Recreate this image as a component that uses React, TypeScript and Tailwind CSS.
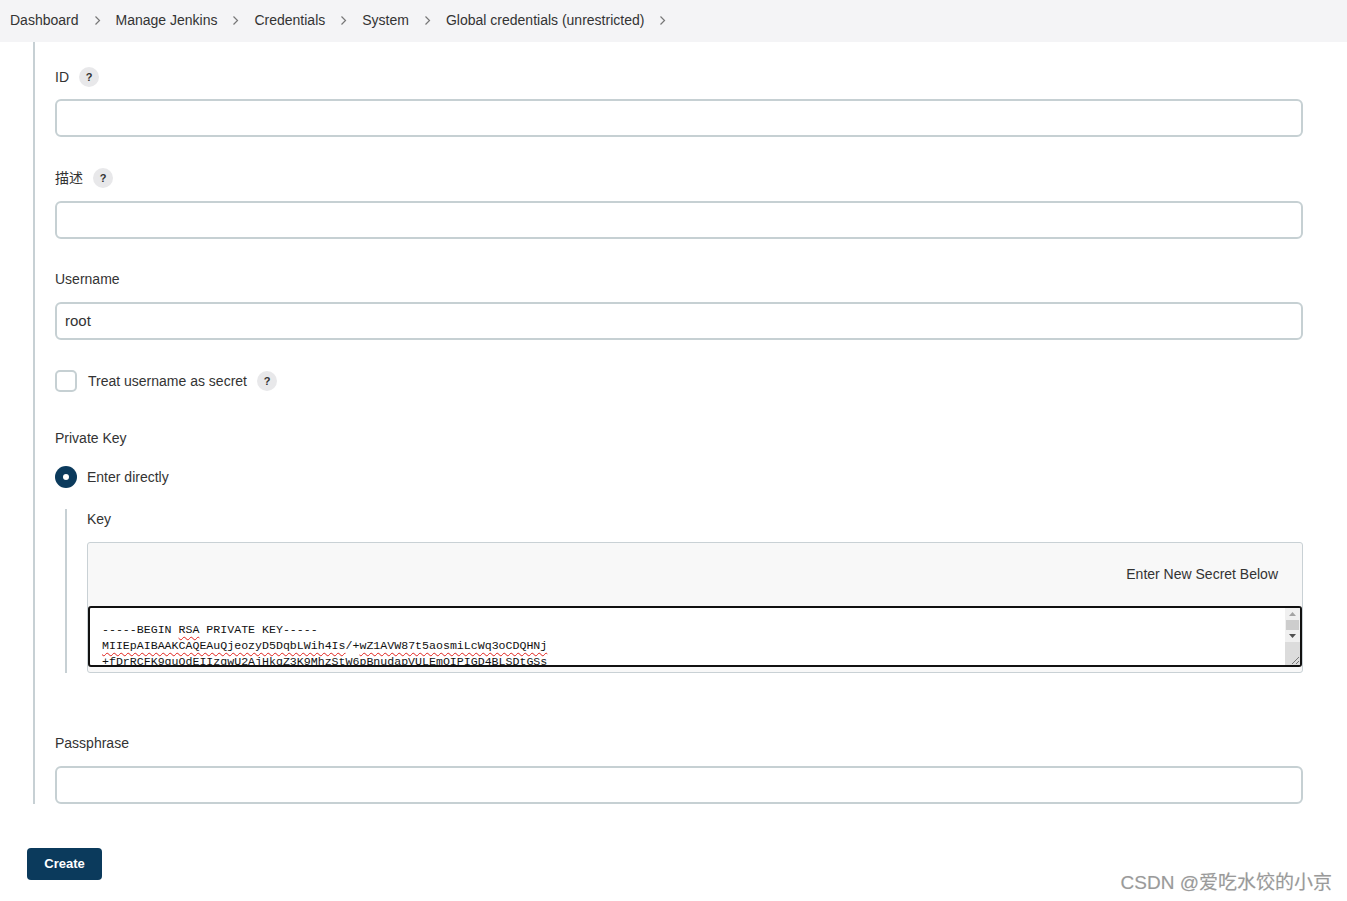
import React from "react";

const font = { fontFamily: '"Liberation Sans", "Noto Sans CJK SC", sans-serif' };

function Help() {
  return (
    <span className="ml-[10px] inline-flex h-[20px] w-[20px] items-center justify-center rounded-full bg-[#e8e8ea] text-[11px] font-bold text-[#333]">
      ?
    </span>
  );
}

function Chevron() {
  return (
    <svg width="7" height="11" viewBox="0 0 7 11" className="mx-[15px]">
      <path d="M1.5 1.5 L5.5 5.5 L1.5 9.5" fill="none" stroke="#777" strokeWidth="1.2" />
    </svg>
  );
}

function Input({ value = "" }: { value?: string }) {
  return (
    <div className="flex h-[38px] w-full items-center rounded-[6px] border-2 border-[#c6d0d3] bg-white pl-[8px] text-[15px] text-[#333]">
      {value}
    </div>
  );
}

const W = ({ children }: { children: React.ReactNode }) => (
  <span className="underline decoration-wavy decoration-[#e0201a] decoration-1 underline-offset-[3px]">{children}</span>
);

export default function App() {
  return (
    <div className="min-h-[901px] w-[1347px] bg-white text-[#333]" style={font}>
      <div className="flex h-[42px] items-center bg-[#f4f4f6] pb-[2px] pl-[10px] text-[14px] text-[#333]">
        <span>Dashboard</span>
        <Chevron />
        <span>Manage Jenkins</span>
        <Chevron />
        <span>Credentials</span>
        <Chevron />
        <span>System</span>
        <Chevron />
        <span>Global credentials (unrestricted)</span>
        <Chevron />
      </div>

      <div className="ml-[33px] border-l-2 border-[#c7d0d4] pl-[20px] pr-[44px] pt-[25px]">
        <div className="flex h-[20px] items-center text-[14px]">
          <span>ID</span>
          <Help />
        </div>
        <div className="mt-[12px]">
          <Input />
        </div>

        <div className="mt-[31px] flex h-[20px] items-center text-[14px]">
          <span>描述</span>
          <Help />
        </div>
        <div className="mt-[13px]">
          <Input />
        </div>

        <div className="mt-[30px] flex h-[20px] items-center text-[14px]">
          <span>Username</span>
        </div>
        <div className="mt-[13px]">
          <Input value="root" />
        </div>

        <div className="mt-[30px] flex h-[22px] items-center text-[14px]">
          <span className="h-[22px] w-[22px] rounded-[5px] border-2 border-[#c6d0d3] bg-white" />
          <span className="ml-[11px]">Treat username as secret</span>
          <Help />
        </div>

        <div className="mt-[36px] flex h-[20px] items-center text-[14px]">
          <span>Private Key</span>
        </div>

        <div className="mt-[18px] flex h-[22px] items-center text-[14px]">
          <span className="flex h-[22px] w-[22px] items-center justify-center rounded-full bg-[#0b3a5c]">
            <span className="h-[6px] w-[6px] rounded-full bg-white" />
          </span>
          <span className="ml-[10px]">Enter directly</span>
        </div>

        <div className="ml-[10px] mt-[21px] border-l-2 border-[#c7d0d4] pl-[20px]">
          <div className="flex h-[20px] items-center text-[14px]">
            <span>Key</span>
          </div>
          <div className="mt-[13px] rounded-[3px] border border-[#c9d1d5] bg-[#f8f8f8] pb-[5px]">
            <div className="flex h-[63px] items-center justify-end pr-[24px] text-[14px]">
              Enter New Secret Below
            </div>
            <div className="flex h-[61px] overflow-hidden rounded-[3px] border-2 border-[#111] bg-white">
              <div
                className="flex-1 overflow-hidden whitespace-pre pl-[12px] pt-[14px] text-[11.6px] leading-[16px] text-[#111]"
                style={{ fontFamily: '"Liberation Mono", monospace' }}
              >
                <div>
                  -----BEGIN <W>RSA</W> PRIVATE KEY-----
                </div>
                <div>
                  <W>MIIEpAIBAAKCAQEAuQjeozyD5DqbLWih4Is</W>/+<W>wZ1AVW87t5aosmiLcWq3oCDQHNj</W>
                </div>
                <div>+fDrRCFK9guQdEIIzqwU2AjHkqZ3K9MhzStW6pBnudapVULEmOIPIGD4BLSDtGSs</div>
              </div>
              <div className="flex w-[15px] flex-col bg-[#f0f0f0]">
                <div className="flex h-[12px] items-center justify-center">
                  <svg width="7" height="4" viewBox="0 0 7 4">
                    <path d="M0 4 L3.5 0 L7 4 Z" fill="#a3a3a3" />
                  </svg>
                </div>
                <div className="mx-[1px] h-[10px] bg-[#cdcdcd]" />
                <div className="flex h-[12px] items-center justify-center">
                  <svg width="7" height="4" viewBox="0 0 7 4">
                    <path d="M0 0 L7 0 L3.5 4 Z" fill="#505050" />
                  </svg>
                </div>
                <div className="flex flex-1 items-end justify-end bg-[#dcdcdc]">
                  <svg width="10" height="10" viewBox="0 0 10 10">
                    <path d="M9 2 L2 9 M9 6 L6 9" stroke="#777" strokeWidth="1" />
                  </svg>
                </div>
              </div>
            </div>
          </div>
        </div>

        <div className="mt-[60px] flex h-[20px] items-center text-[14px]">
          <span>Passphrase</span>
        </div>
        <div className="mt-[13px]">
          <Input />
        </div>
      </div>

      <div className="ml-[27px] mt-[44px] flex h-[32px] w-[75px] items-center justify-center rounded-[4px] bg-[#0b3a5c] text-[13px] font-bold text-white">
        Create
      </div>

      <div className="mt-[-11px] flex justify-end pr-[15px]">
        <span
          className="text-[19px] text-[#9a9a9a]"
          style={{ fontFamily: '"Liberation Sans", "Noto Sans CJK SC", sans-serif', textShadow: "0 0 1px #ddd" }}
        >
          CSDN @爱吃水饺的小京
        </span>
      </div>
    </div>
  );
}
